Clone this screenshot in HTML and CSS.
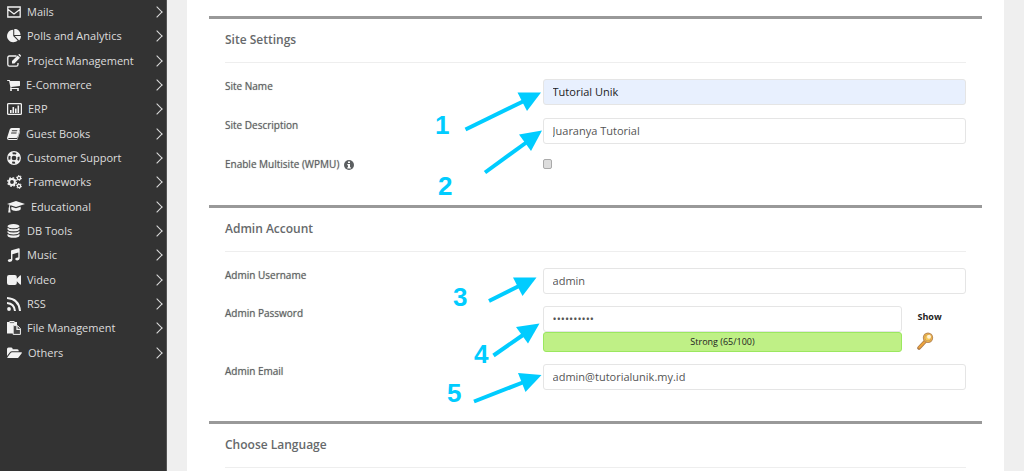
FILE: index.html
```html
<!DOCTYPE html>
<html lang="en">
<head>
  <meta charset="UTF-8">
  <meta name="viewport" content="width=device-width, initial-scale=1.0">
  <title>Install - Site Settings</title>
  <link rel="stylesheet" href="styles.css">
</head>
<body>
  <div class="layout">
    <nav class="sidebar">
      <a class="menu-item" href="#">
        <svg width="14" height="14" viewBox="0 0 14 14"><path class="line" d="M.8 2h12.400v10H.8zM.8 4.200L7 9l6.200-4.800"/></svg>
        <span>Mails</span>
      </a>
      <a class="menu-item" href="#">
        <svg width="14" height="14" viewBox="0 64 1728 1664"><path d="M768 890l546 546q-106 108-247.500 168t-298.500 60q-209 0-385.500-103t-279.500-279.500-103-385.500 103-385.500 279.500-279.500 385.500-103v762zm187 6h773q0 157-60 298.500t-168 247.500zm709-128h-768v-768q209 0 385.500 103t279.500 279.500 103 385.500z"/></svg>
        <span>Polls and Analytics</span>
      </a>
      <a class="menu-item" href="#">
        <svg width="14" height="14" viewBox="0 0 14 14"><path class="line" d="M9.500 2H2.400Q.8 2 .8 3.600v7Q.8 12.200 2.400 12.200h7Q11 12.200 11 10.600V9"/><path d="M5 7l5.600-5.600 2.400 2.400L7.400 9.400H5zM11.200.8l.6-.5q.5-.4 1 0l1 1q.4.500 0 1l-.5.600z"/></svg>
        <span>Project Management</span>
      </a>
      <a class="menu-item" href="#">
        <svg width="13" height="14" viewBox="64 64 1664 1664"><path d="M704 1536q0 52-38 90t-90 38-90-38-38-90 38-90 90-38 90 38 38 90zm896 0q0 52-38 90t-90 38-90-38-38-90 38-90 90-38 90 38 38 90zm128-1088v512q0 24-16.500 42.500t-40.500 21.500l-1044 122q13 60 13 70 0 16-24 64h920q26 0 45 19t19 45-19 45-45 19h-1024q-26 0-45-19t-19-45q0-11 8-31.500t16-36 21.500-40 15.500-29.500l-177-823h-204q-26 0-45-19t-19-45 19-45 45-19h256q16 0 28.500 6.500t19.500 15.500 13 24.500 8 26 5.500 29.500 4.500 26h1201q26 0 45 19t19 45z"/></svg>
        <span>E-Commerce</span>
      </a>
      <a class="menu-item" href="#">
        <svg width="15" height="14" viewBox="0 0 15 14"><rect class="line" x=".6" y="1.600" width="13.800" height="10.800" rx="1"/><path d="M3 8h1.600v3H3zM5.500 5h1.600v6H5.500zM8 6.500h1.600V11H8zM10.500 3.500h1.600V11h-1.600z"/></svg>
        <span>ERP</span>
      </a>
      <a class="menu-item" href="#">
        <svg width="13" height="14" viewBox="0 0 13 14"><path fill-rule="evenodd" d="M4.500 1h7.500q1.200.1.900 1.300L10.600 10q-.3.900-1.200.9H2q-.8 0-.8.600 0 .6.900.6h7.600q.5 0 .7-.5L12.600 4q.6.400.3 1.200l-2.200 6.900q-.3 1-1.300 1H1.800Q0 12.900 0 10.900L2.700 2.500Q3.200 1 4.500 1zM5 3.300l-.3.900h5.400l.3-.9zM4.300 5.500l-.3.900h5.400l.3-.9z"/></svg>
        <span>Guest Books</span>
      </a>
      <a class="menu-item" href="#">
        <svg width="14" height="14" viewBox="0 0 14 14"><circle class="line" cx="7" cy="7" r="6.300"/><circle class="line" cx="7" cy="7" r="3"/><circle cx="7" cy="7" r="4.700" fill="none" stroke="#f2f2f2" stroke-width="3.600" stroke-dasharray="3.690 3.690" stroke-dashoffset="5.530" transform="rotate(90 7 7)"/></svg>
        <span>Customer Support</span>
      </a>
      <a class="menu-item" href="#">
        <svg width="15" height="14" viewBox="0 0 15 14"><circle cx="5" cy="7" r="2.900" fill="none" stroke="#f2f2f2" stroke-width="2"/><circle cx="5" cy="7" r="4.300" fill="none" stroke="#f2f2f2" stroke-width="1.400" stroke-dasharray="1.690 1.690"/><circle class="line" cx="12" cy="3" r="1.600"/><circle class="line" cx="12" cy="11" r="1.600"/><circle cx="12" cy="3" r="2.500" fill="none" stroke="#f2f2f2" stroke-dasharray="1.300 1.300"/><circle cx="12" cy="11" r="2.500" fill="none" stroke="#f2f2f2" stroke-dasharray="1.300 1.300"/></svg>
        <span>Frameworks</span>
      </a>
      <a class="menu-item" href="#">
        <svg width="18" height="14" viewBox="0 0 18 14"><path d="M9 1l9 3-9 3-5.400-1.800q-.7.600-.8 2.100.8.600.3 1.500l.5 3.700H1.200l.5-3.700q-.6-.9.300-1.600 0-1.400.6-2.400L0 4zM4.400 6.700L9 8.200l4.600-1.500.2 2.600q-1 1.700-4.800 1.700t-4.800-1.700z"/></svg>
        <span>Educational</span>
      </a>
      <a class="menu-item" href="#">
        <svg width="14" height="14" viewBox="0 0 14 14"><ellipse cx="6.500" cy="2.200" rx="6" ry="2.100"/><path d="M.5 3.700q2 1.500 6 1.500t6-1.500v1.700q-1 1.900-6 1.900t-6-1.900zM.5 6.900q2 1.500 6 1.500t6-1.500v1.600q-1 1.900-6 1.900t-6-1.900zM.5 10q2 1.500 6 1.500t6-1.500v1.700Q11.500 13.800 6.500 13.800t-6-2.100z"/></svg>
        <span>DB Tools</span>
      </a>
      <a class="menu-item" href="#">
        <svg width="14" height="14" viewBox="0 0 14 14"><path d="M4 3q0-.6.600-.8l7-2Q12.700 0 12.700 1v9.200q0 2-2.500 2.200-2 0-2-1.300 0-1.700 2.600-1.700l.5.100V4.600L5.400 6.300v5.500q0 1.900-2.700 2.100-2 0-2-1.300 0-1.700 2.700-1.700l.6.100z"/></svg>
        <span>Music</span>
      </a>
      <a class="menu-item" href="#">
        <svg width="14" height="14" viewBox="0 0 14 14"><path d="M2 2h5.800q2 0 2 2v1.700l3.200-3.200q1-.5 1 .5v8q0 1-1 .5L9.800 8.300V10q0 2-2 2H2q-2 0-2-2V4q0-2 2-2z"/></svg>
        <span>Video</span>
      </a>
      <a class="menu-item" href="#">
        <svg width="14" height="14" viewBox="0 0 14 14"><circle cx="2" cy="12" r="1.900"/><path d="M0 1q12 .8 13 13M0 6q7.300.6 8 8" fill="none" stroke="#f2f2f2" stroke-width="2"/></svg>
        <span>RSS</span>
      </a>
      <a class="menu-item" href="#">
        <svg width="14" height="14" viewBox="0 0 14 14"><path d="M0 1h2.500V0h5v1H10v3H6v8.500H0z"/><path d="M2.800 1.600h4.400" stroke="#777"/><path d="M6.200 4.600h4.300l2.900 3v5.800H6.200z" stroke="#f2f2f2" fill="#444"/><path class="line" d="M10 5v3.300h3.300"/></svg>
        <span>File Management</span>
      </a>
      <a class="menu-item" href="#">
        <svg width="15" height="14" viewBox="0 0 15 14"><path d="M0 10V3q0-1.500 1.500-1.500h2.800q1.400 0 1.400 1.700h4.600q1.500 0 1.500 2H5Q3.700 5.200 2.900 6.200zM5 6.200h9.400q.9.200.3 1l-3 4q-.7.900-1.600.9H.9q-1-.1-.3-1l3-4Q4.200 6.200 5 6.200z"/></svg>
        <span>Others</span>
      </a>
    </nav>

    <main class="content">
      <form class="card">
        <section class="panel">
          <h2>Site Settings</h2>
          <div class="rows">
            <div class="row">
              <label for="siteName">Site Name</label>
              <input class="text-input autofilled" type="text" id="siteName" value="Tutorial Unik">
            </div>
            <div class="row">
              <label for="siteDesc">Site Description</label>
              <input class="text-input" type="text" id="siteDesc" value="Juaranya Tutorial">
            </div>
            <div class="row">
              <label for="multisite">Enable Multisite (WPMU)
                <svg class="info" width="10" height="10" viewBox="0 0 10 10"><circle cx="5" cy="5" r="5" fill="#5c5f61"/><path d="M4 1.500h2v1.500H4zM3.300 4H6v3.200h.8v1.200H3.300V7.200H4V5.200h-.7z" fill="#fff"/></svg>
              </label>
              <input class="checkbox" type="checkbox" id="multisite">
            </div>
          </div>
        </section>

        <section class="panel panel-account">
          <h2>Admin Account</h2>
          <div class="rows">
            <div class="row">
              <label for="adminUser">Admin Username</label>
              <input class="text-input" type="text" id="adminUser" value="admin">
            </div>
            <div class="row">
              <label for="adminPass">Admin Password</label>
              <div class="password">
                <div class="password-field">
                  <input class="text-input" type="password" id="adminPass" value="tutorial65">
                  <div class="strength">Strong (65/100)</div>
                </div>
                <div class="password-tools">
                  <button class="show" type="button">Show</button>
                  <button class="key" type="button" aria-label="Generate password">
                    <svg width="17" height="18" viewBox="0 0 17 18"><path d="M9 8.500L2 16" stroke="#a9794a" stroke-width="3.600" stroke-linecap="round"/><path d="M9.500 8L2.300 15.500" stroke="#eea43c" stroke-width="2" stroke-linecap="round"/><circle cx="11" cy="5.800" r="4" fill="#f6c95c" stroke="#b98b5b" stroke-width="2.400"/><circle cx="11" cy="5.800" r="3.800" fill="none" stroke="#f3b745"/><circle cx="12" cy="4.700" r="2" fill="#fff3d6"/></svg>
                  </button>
                </div>
              </div>
            </div>
            <div class="row">
              <label for="adminEmail">Admin Email</label>
              <input class="text-input" type="email" id="adminEmail" value="admin@tutorialunik.my.id">
            </div>
          </div>
        </section>

        <section class="panel">
          <h2>Choose Language</h2>
        </section>
      </form>

      <!-- numbered steps on top of the form -->
      <svg class="steps" width="120" height="340" viewBox="430 80 120 340">
        <g class="shaft">
          <path d="M465.500 129.500L524 101"/>
          <path d="M485 172.500L527 142"/>
          <path d="M489 301L519 286"/>
          <path d="M493.500 355.500L523 335"/>
          <path d="M474 401.500L524 382"/>
        </g>
        <g class="head">
          <path d="M541 92.500L517.500 92.500 527 111z"/>
          <path d="M542 130.500L519 134.500 531 151z"/>
          <path d="M536.500 277.500L513 277.500 522.500 296z"/>
          <path d="M539.500 323.500L516 327 528 343.500z"/>
          <path d="M541.500 375L518 373 525.500 392z"/>
        </g>
        <text x="435" y="134">1</text>
        <text x="438" y="195">2</text>
        <text x="453" y="306">3</text>
        <text x="474" y="363">4</text>
        <text x="447" y="402">5</text>
      </svg>
    </main>
  </div>
</body>
</html>
```

FILE: styles.css
```css
* {
  box-sizing: border-box;
}
body {
  margin: 0;
  font-family: "Open Sans", sans-serif;
  background-color: #efefef;
  color: #555;
}
.layout {
  display: flex;
  min-height: 100vh;
}

/* sidebar */
.sidebar {
  flex: 0 0 167px;
  background-color: #333;
  border-right: 1px solid #555;
  display: grid;
  grid-template-rows: repeat(15, minmax(24px, 364fr)) 1590fr;
}
.menu-item {
  display: flex;
  align-items: center;
  gap: 6px;
  padding: 0 5px 0 7px;
  color: #ddd;
  font-size: 11px;
  line-height: 24px;
  text-decoration: none;
}
.menu-item svg {
  flex: none;
  fill: #f2f2f2;
}
.menu-item .line {
  fill: none;
  stroke: #f2f2f2;
  stroke-width: 1.3px;
}
.menu-item::after {
  content: "";
  width: 7px;
  height: 7px;
  margin-left: auto;
  border: solid #ddd;
  border-width: 1px 1px 0 0;
  transform: rotate(45deg);
}

/* form */
.content {
  position: relative;
  flex: 1;
  padding: 0 20px;
}
.card {
  min-height: 100vh;
  padding: 16px 22px 0;
  background-color: #fff;
}
.panel {
  border-top: 3px solid #999;
  padding: 0 16px 22px;
}
.panel-account {
  padding-bottom: 31px;
}
.panel:last-child {
  padding-bottom: 0;
}
h2 {
  margin: 0;
  padding: 9px 0 10px;
  border-bottom: 1px solid #eee;
  color: #66696b;
  font-size: 12px;
  font-weight: 600;
  line-height: 24px;
}
.rows {
  display: grid;
  gap: 13px;
  padding-top: 16px;
}
.panel-account .rows {
  gap: 12px;
}
.row {
  display: grid;
  grid-template-columns: 3fr 4fr;
  align-items: start;
  min-height: 26px;
}
label {
  color: #5c5f61;
  font-size: 10px;
  font-weight: 500;
  line-height: 14px;
  text-shadow: 0 0 1px #999;
}
.info {
  margin-left: 2px;
  vertical-align: -2px;
}
.text-input {
  display: block;
  width: 100%;
  height: 26px;
  padding: 0 9px 2px;
  border: 1px solid #e5e5e5;
  border-radius: 3px;
  background-color: #fff;
  color: #555;
  font-family: inherit;
  font-size: 11px;
}
.autofilled {
  background-color: #e8f0fe;
  color: #222;
}
.checkbox {
  appearance: none;
  width: 9px;
  height: 10px;
  margin: 2px 0 0;
  border: 1px solid #aaa;
  border-radius: 2px;
  background-color: #ddd;
}
.password {
  display: grid;
  grid-template-columns: 17fr 3fr;
}
.strength {
  height: 20px;
  border: 1px solid #9be85f;
  border-radius: 3px;
  background-color: #bff086;
  color: #222;
  font-size: 9px;
  line-height: 18px;
  text-align: center;
}
.password-tools {
  display: flex;
  flex-direction: column;
  align-items: flex-start;
  padding: 4px 0 0 15px;
  gap: 8px;
}
.password-tools button {
  padding: 0;
  border: none;
  background: none;
  cursor: pointer;
}
.password-tools .show {
  color: #222;
  font-family: inherit;
  font-size: 9px;
  font-weight: 700;
  line-height: 14px;
}
.key svg {
  display: block;
}

/* step markers */
.steps {
  position: absolute;
  top: 80px;
  left: 263px;
  pointer-events: none;
}
.steps .shaft {
  stroke: #00ccff;
  stroke-width: 4px;
}
.steps .head {
  fill: #00ccff;
}
.steps text {
  fill: #00ccff;
  font-family: "Liberation Sans", Arial, sans-serif;
  font-size: 26px;
  font-weight: 700;
}
```
